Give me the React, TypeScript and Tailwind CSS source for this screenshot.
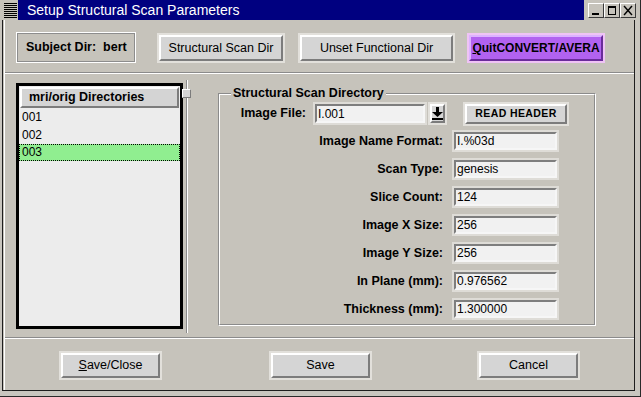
import React from "react";

type P = { children?: React.ReactNode; className?: string };

function Btn({
  children,
  className = "",
  ring = "bg-[#e2e0db]",
  face = "bg-[#d5d5d5]",
  bevel = "border-t-white border-l-white border-r-[#7c7c7c] border-b-[#7c7c7c]",
  inner = "",
}: P & { ring?: string; face?: string; bevel?: string; inner?: string }) {
  return (
    <div className={`p-[2px] ${ring} ${className}`}>
      <div
        className={`h-full w-full border-2 ${bevel} ${face} flex items-center justify-center overflow-hidden whitespace-nowrap ${inner}`}
      >
        {children}
      </div>
    </div>
  );
}

function Entry({ value, className = "" }: { value: string; className?: string }) {
  return (
    <div className={`p-[2px] bg-[#dedcd7] ${className}`}>
      <div className="h-full w-full border-2 border-t-[#7e7e7e] border-l-[#7e7e7e] border-r-[#f6f6f6] border-b-[#f6f6f6] bg-[#f1f1f1] flex items-center pl-[1px] text-[12px] leading-none">
        {value}
      </div>
    </div>
  );
}

function TitleBtn({ kind }: { kind: "min" | "max" | "close" }) {
  return (
    <div className="w-[16px] h-[15px] bg-[#c6c3bb] border border-t-white border-l-white border-r-[#3a3a3a] border-b-[#3a3a3a] flex items-center justify-center">
      <svg width="12" height="11" viewBox="0 0 12 11">
        {kind === "min" && <rect x="2" y="8" width="7" height="2" fill="#000" />}
        {kind === "max" && (
          <g fill="none" stroke="#000">
            <rect x="2.5" y="1.5" width="7" height="8" />
            <line x1="2" y1="2.5" x2="10" y2="2.5" />
          </g>
        )}
        {kind === "close" && (
          <g stroke="#000" strokeWidth="1.4">
            <line x1="2" y1="1" x2="10" y2="10" />
            <line x1="10" y1="1" x2="2" y2="10" />
          </g>
        )}
      </svg>
    </div>
  );
}

const rows: [string, string][] = [
  ["Image Name Format:", "I.%03d"],
  ["Scan Type:", "genesis"],
  ["Slice Count:", "124"],
  ["Image X Size:", "256"],
  ["Image Y Size:", "256"],
  ["In Plane (mm):", "0.976562"],
  ["Thickness (mm):", "1.300000"],
];

export default function App() {
  return (
    <div className="w-[641px] h-[397px] bg-[#c6c3bb] flex flex-col border-r border-b border-[#2a2a2a] overflow-hidden font-['Liberation_Sans',Arial,sans-serif] text-black">
      {/* Title bar */}
      <div className="h-[20px] flex shrink-0">
        <div className="w-[3px]" />
        <div className="w-[15px] h-[17px] mt-[2px]">
          <svg width="15" height="17" viewBox="0 0 15 17">
            {[1, 3, 5, 7, 9, 11, 13, 15].map((y) => (
              <rect key={y} x="1" y={y} width="13" height="1" fill="#000" />
            ))}
          </svg>
        </div>
        <div className="w-[566px] bg-[#000080] text-white text-[14px] leading-[20px] pl-[9px] whitespace-nowrap">
          Setup Structural Scan Parameters
        </div>
        <div className="flex-1 flex items-start pt-[3px] pl-[4px]">
          <TitleBtn kind="min" />
          <TitleBtn kind="max" />
          <TitleBtn kind="close" />
        </div>
      </div>

      {/* Window body */}
      <div className="flex-1 flex flex-col pl-[2px] pr-[5px] pb-[5px] bg-[#c9c6bf]">
        <div className="flex-1 flex flex-col border-l border-r border-b border-[#1e1e1e] bg-[#c6c3bb]">
          <div className="flex-1 flex flex-col ml-[1px] border-l border-white">
            {/* Top row */}
            <div className="h-[52px] flex items-start pt-[12px] shrink-0">
              <div className="ml-[11px] w-[120px] h-[31px] border border-white">
                <div className="h-full border border-[#8d8d8d] flex items-center pl-[8px] text-[12.5px] font-bold whitespace-pre">
                  Subject Dir:  bert
                </div>
              </div>
              <Btn className="ml-[21px] mt-[1px] w-[128px] h-[30px]" inner="text-[12.5px]">
                Structural Scan Dir
              </Btn>
              <Btn className="ml-[13px] mt-[1px] w-[157px] h-[30px]" inner="text-[12.5px]">
                Unset Functional Dir
              </Btn>
              <Btn
                className="ml-[12px] mt-[1px] w-[138px] h-[30px]"
                ring="bg-[#efc3f5]"
                face="bg-[#b262f0]"
                bevel="border-t-[#dcb2ff] border-l-[#dcb2ff] border-r-[#6a2c9a] border-b-[#6a2c9a]"
                inner="text-[12px] font-bold"
              >
                <span>
                  <span className="underline">Q</span>uitCONVERT/AVERA
                </span>
              </Btn>
            </div>

            {/* Separator */}
            <div className="h-[2px] border-t border-b border-t-[#8b8b8b] border-b-white shrink-0" />

            {/* Main */}
            <div className="h-[263px] flex items-start shrink-0">
              {/* List */}
              <div className="ml-[11px] mt-[9px] w-[167px] h-[246px] border-[3px] border-black bg-[#ececec] flex flex-col">
                <div className="mt-[1px] ml-[1px] w-[159px] h-[21px] border-2 border-t-white border-l-white border-r-[#7c7c7c] border-b-[#7c7c7c] bg-[#d4d4d4] flex items-center pl-[7px] text-[12.5px] font-bold whitespace-nowrap">
                  mri/orig Directories
                </div>
                <div className="h-[18px] pl-[3px] text-[12px] leading-[18px]">001</div>
                <div className="h-[18px] pl-[3px] text-[12px] leading-[18px]">002</div>
                <div className="h-[17px] bg-[#90ee90] border border-dotted border-black pl-[2px] text-[12px] leading-[15px]">
                  003
                </div>
              </div>

              {/* Splitter */}
              <div className="relative w-[8px] mt-[6px] h-[253px]">
                <div className="absolute left-[3px] top-0 bottom-0 w-[2px] border-l border-r border-l-[#8b8b8b] border-r-white" />
                <div className="absolute left-[-1px] top-[9px] w-[9px] h-[9px] bg-[#d4d4d4] border border-t-white border-l-white border-r-[#7c7c7c] border-b-[#7c7c7c]" />
              </div>

              {/* Group */}
              <div className="ml-[27px] mt-[19px] w-[378px] h-[233px] relative border border-t-[#8b8b8b] border-l-[#8b8b8b] border-r-white border-b-white">
                <div className="h-full border border-t-white border-l-white border-r-[#8b8b8b] border-b-[#8b8b8b] flex flex-col pt-[7px]">
                  <div className="h-[23px] flex items-start">
                    <div className="w-[86px] h-[23px] flex items-center justify-end text-[12.5px] font-bold whitespace-nowrap">
                      Image File:
                    </div>
                    <Entry value="I.001" className="ml-[7px] w-[114px] h-[23px]" />
                    <Btn className="ml-[1px] w-[19px] h-[23px]" inner="">
                      <svg width="11" height="13" viewBox="0 0 11 13">
                        <rect x="4" y="0" width="3" height="5" fill="#000" />
                        <polygon points="0,5 11,5 5.5,10" fill="#000" />
                        <rect x="0" y="11" width="11" height="2" fill="#000" />
                      </svg>
                    </Btn>
                    <Btn className="ml-[16px] w-[106px] h-[24px]" inner="text-[10.5px] font-bold tracking-[0.4px]">
                      READ HEADER
                    </Btn>
                  </div>
                  <div className="mt-[5px] flex flex-col gap-[6px]">
                    {rows.map(([label, value]) => (
                      <div key={label} className="h-[22px] flex items-center">
                        <div className="w-[223px] text-right text-[12.5px] font-bold whitespace-nowrap">
                          {label}
                        </div>
                        <Entry value={value} className="ml-[9px] w-[107px] h-[22px]" />
                      </div>
                    ))}
                  </div>
                </div>
                <div className="absolute left-[12px] top-[-9px] px-[2px] bg-[#c6c3bb] text-[12.5px] font-bold leading-[16px] whitespace-nowrap">
                  Structural Scan Directory
                </div>
              </div>
            </div>

            {/* Separator */}
            <div className="h-[2px] border-t border-b border-t-[#8b8b8b] border-b-white shrink-0" />

            {/* Bottom buttons */}
            <div className="flex-1 flex items-start pt-[12px]">
              <Btn className="ml-[54px] w-[103px] h-[29px]" inner="text-[12.5px]">
                <span>
                  <span className="underline">S</span>ave/Close
                </span>
              </Btn>
              <Btn className="ml-[107px] w-[103px] h-[29px]" inner="text-[12.5px]">
                Save
              </Btn>
              <Btn className="ml-[105px] w-[103px] h-[29px]" inner="text-[12.5px]">
                Cancel
              </Btn>
            </div>
          </div>
        </div>
      </div>
    </div>
  );
}
